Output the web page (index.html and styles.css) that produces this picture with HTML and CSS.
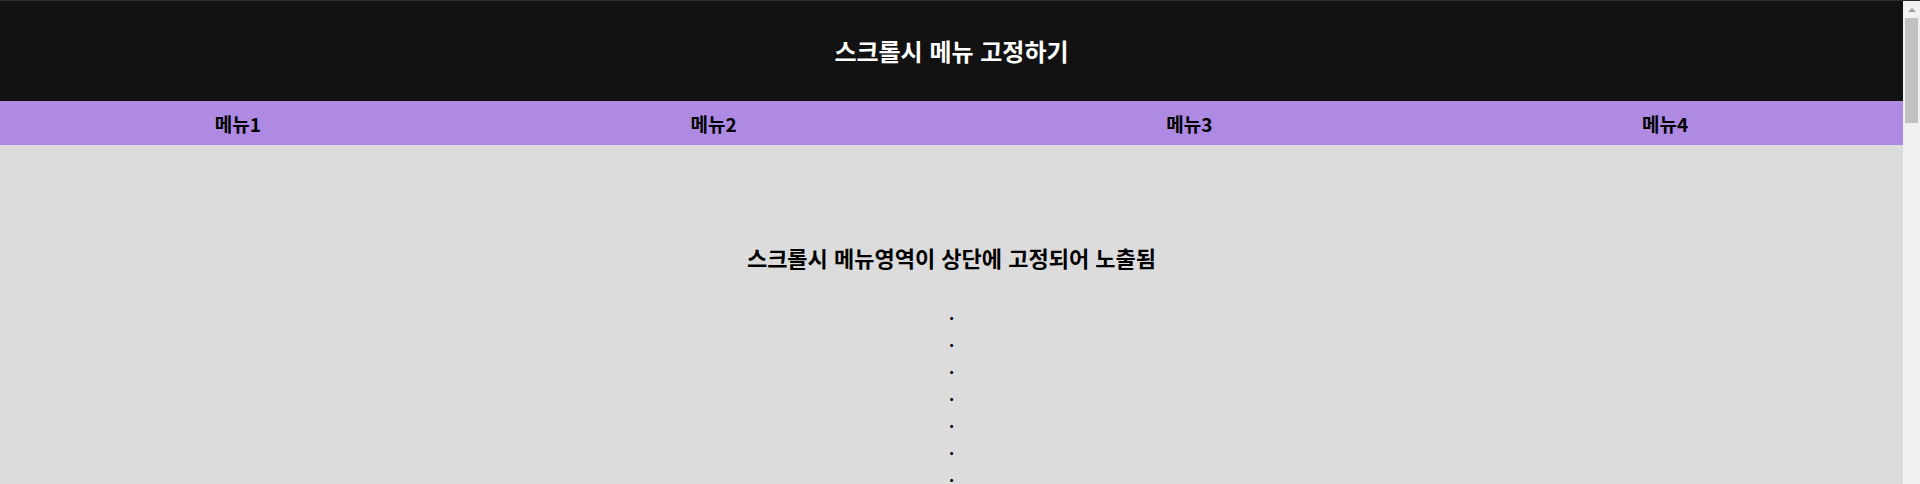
FILE: index.html
```html
<!DOCTYPE html>
<html lang="ko">
<head>
<meta charset="utf-8">
<title>스크롤시 메뉴 고정하기</title>
<link rel="stylesheet" href="styles.css">
</head>
<body>
<div class="frame">
  <div class="page">
    <header class="top">
      <h1 class="top-title">스크롤시 메뉴 고정하기</h1>
    </header>
    <nav class="menu">
      <a class="menu-item" href="#">메뉴1</a>
      <a class="menu-item" href="#">메뉴2</a>
      <a class="menu-item" href="#">메뉴3</a>
      <a class="menu-item" href="#">메뉴4</a>
    </nav>
    <main class="content">
      <h2 class="content-title">스크롤시 메뉴영역이 상단에 고정되어 노출됨</h2>
      <p class="dots">.<br>.<br>.<br>.<br>.<br>.<br>.</p>
    </main>
  </div>
  <div class="scrollbar" aria-hidden="true">
    <div class="scroll-arrow"></div>
    <div class="scroll-thumb"></div>
  </div>
</div>
</body>
</html>
```
FILE: styles.css
```css
html, body {
  margin: 0;
  padding: 0;
  height: 100%;
  overflow: hidden;
}
body {
  font-family: "Noto Sans CJK KR", "Noto Sans", sans-serif;
  background: #dcdcdc;
  color: #000;
  border-top: 1px solid #2a2a2a;
  box-sizing: border-box;
}
.frame {
  display: flex;
  height: 100%;
}
.page {
  flex: 1;
  min-width: 0;
  overflow: hidden;
}
.top {
  height: 100px;
  background: #121212;
  display: flex;
  align-items: center;
  justify-content: center;
}
.top-title {
  margin: 0;
  color: #fff;
  font-size: 24px;
  font-weight: 700;
  line-height: 30px;
}
.menu {
  height: 44px;
  background: #ae8ae3;
  display: grid;
  grid-template-columns: repeat(4, 1fr);
  align-items: center;
}
.menu-item {
  text-align: center;
  color: #000;
  text-decoration: none;
  font-size: 19px;
  font-weight: 700;
}
.content {
  padding: 97px 0 0;
  text-align: center;
}
.content-title {
  margin: 0 0 28px;
  font-size: 22px;
  font-weight: 700;
  line-height: 30px;
}
.dots {
  margin: 0;
  font-size: 16px;
  font-weight: 700;
  line-height: 27px;
}
.scrollbar {
  width: 17px;
  flex: none;
  background: #f1f1f1;
  display: flex;
  flex-direction: column;
  align-items: center;
}
.scroll-arrow {
  margin-top: 7px;
  width: 0;
  height: 0;
  border-left: 4px solid transparent;
  border-right: 4px solid transparent;
  border-bottom: 4px solid #a3a3a3;
}
.scroll-thumb {
  margin-top: 6px;
  width: 13px;
  height: 105px;
  background: #c1c1c1;
}
```
